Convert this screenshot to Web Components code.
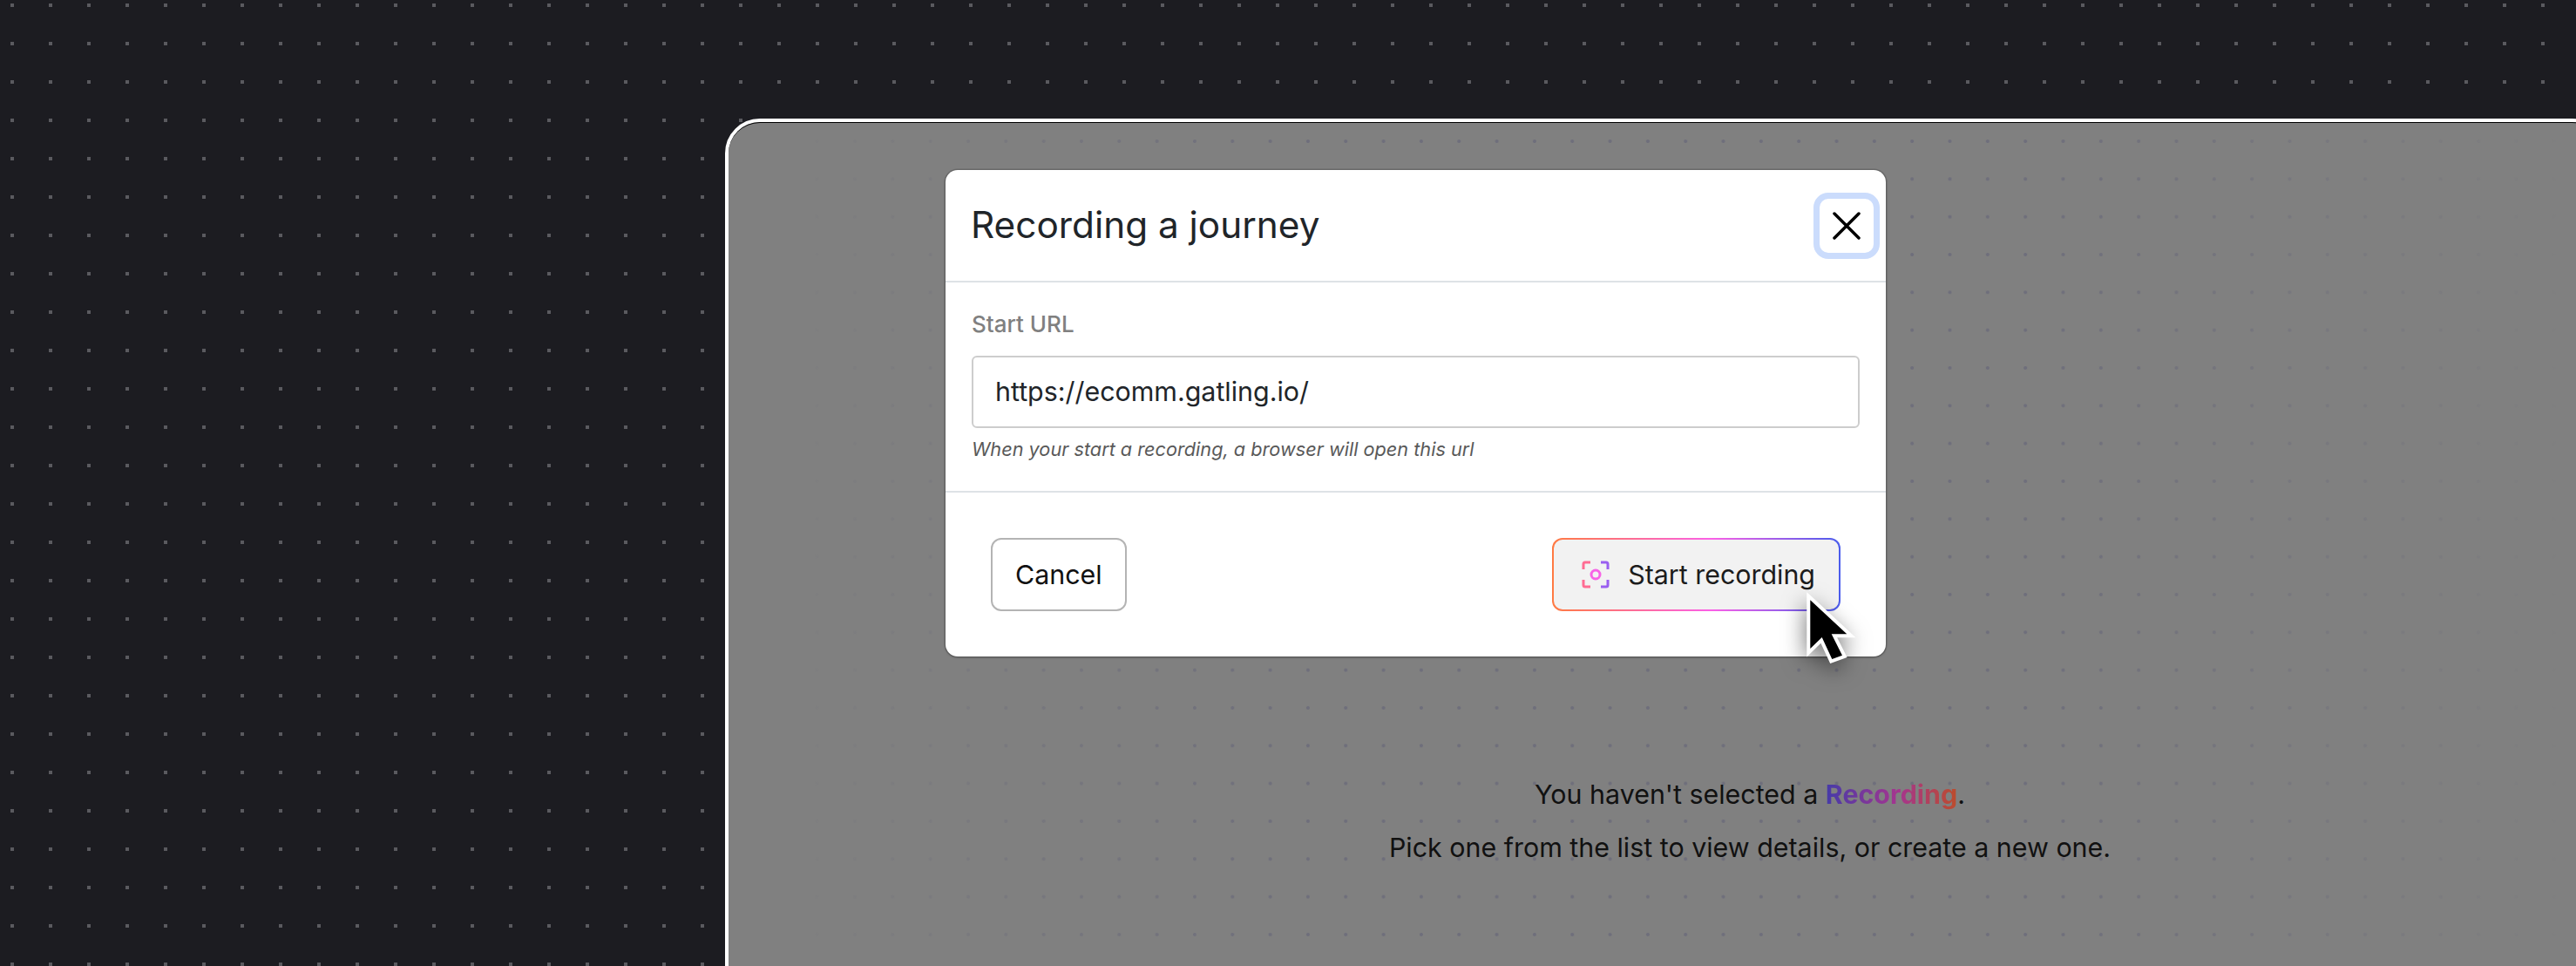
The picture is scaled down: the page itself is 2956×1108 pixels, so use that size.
<!DOCTYPE html>
<html lang="en">
<head>
<meta charset="utf-8">
<title>Recording a journey</title>
<style>
  html, body { margin: 0; height: 1108px; overflow: hidden; background: #1c1c21; }
  body { font-family: Inter, "Liberation Sans", sans-serif; }
</style>
</head>
<body>
<demo-stage>
  <demo-window>
    <empty-state></empty-state>
    <recording-dialog slot="dialog"></recording-dialog>
  </demo-window>
  <mouse-cursor slot="cursor"></mouse-cursor>
</demo-stage>

<script>
class DemoStage extends HTMLElement {
  constructor() {
    super();
    this.attachShadow({ mode: 'open' });
    this.shadowRoot.innerHTML = `
      <style>
        :host {
          display: block;
          position: relative;
          box-sizing: border-box;
          width: 2956px;
          height: 1108px;
          padding: 136px 0 0 832px;
          overflow: hidden;
          background-color: #5a5a5f;
          background-image:
            linear-gradient(to bottom, #1c1c21 4px, transparent 4px, transparent 8px, #1c1c21 8px),
            linear-gradient(to right, #1c1c21 12px, transparent 12px, transparent 16px, #1c1c21 16px);
          background-size: 44px 44px;
        }
        ::slotted(mouse-cursor) {
          position: absolute;
          left: 2060px;
          top: 670px;
        }
      </style>
      <slot></slot>
      <slot name="cursor"></slot>
    `;
  }
}

class DemoWindow extends HTMLElement {
  constructor() {
    super();
    this.attachShadow({ mode: 'open' });
    this.shadowRoot.innerHTML = `
      <style>
        :host {
          display: block;
          box-sizing: border-box;
          width: 2159px;
          height: 1100px;
          border: 4px solid #fff;
          border-radius: 40px;
          background: #808080;
        }
        .inner {
          position: relative;
          box-sizing: border-box;
          height: 100%;
          border-top: 1px solid #000;
          border-radius: 36px 36px 0 0;
          overflow: hidden;
        }
        .dots {
          position: absolute;
          inset: 0;
          background-image: radial-gradient(circle, #6e6e7b 1.5px, transparent 2.4px);
          background-size: 43.33px 43.33px;
          background-position: -6.67px -0.67px;
          -webkit-mask-image: linear-gradient(to right, transparent 60px, #000 640px, #000 1500px, transparent 2115px);
          mask-image: linear-gradient(to right, transparent 60px, #000 640px, #000 1500px, transparent 2115px);
        }
        .content {
          position: relative;
          padding: 746px 0 0 193px;
        }
        /* the modal lies over the page content */
        .overlay {
          position: absolute;
          inset: 0;
          display: flex;
          align-items: flex-start;
          padding: 54px 0 0 249px;
        }
      </style>
      <div class="inner">
        <div class="dots"></div>
        <div class="content"><slot></slot></div>
        <div class="overlay"><slot name="dialog"></slot></div>
      </div>
    `;
  }
}

class EmptyState extends HTMLElement {
  constructor() {
    super();
    this.attachShadow({ mode: 'open' });
    this.shadowRoot.innerHTML = `
      <style>
        :host {
          display: block;
          font-family: Inter, "Liberation Sans", sans-serif;
          font-size: 30.4px;
          line-height: 49px;
          color: #111;
          text-align: center;
        }
        p { margin: 0 0 12px; }
        b {
          font-weight: 700;
          background: linear-gradient(90deg, #463aa8, #a5358f 55%, #bc4c2c);
          -webkit-background-clip: text;
          background-clip: text;
          color: transparent;
        }
      </style>
      <p>You haven't selected a <b>Recording</b>.</p>
      <p>Pick one from the list to view details, or create a new one.</p>
    `;
  }
}

class GhostButton extends HTMLElement {
  constructor() {
    super();
    this.attachShadow({ mode: 'open' });
    this.shadowRoot.innerHTML = `
      <style>
        :host { display: block; }
        button {
          display: flex;
          align-items: center;
          gap: 21px;
          box-sizing: border-box;
          height: 84px;
          padding: 0 26px;
          border: 2px solid #b4b4b4;
          border-radius: 12px;
          background: #fff;
          color: #111;
          font: 400 30.4px Inter, "Liberation Sans", sans-serif;
        }
        :host([gradient]) button {
          padding: 0 27px 0 32px;
          border-color: transparent;
          background:
            linear-gradient(#f2f2f2, #f2f2f2) padding-box,
            linear-gradient(90deg, #ff7a42, #fb60e6 55%, #4a5cec) border-box;
          color: #1c1c1c;
        }
      </style>
      <button type="button"><slot name="icon"></slot><slot></slot></button>
    `;
  }
}

class RecordingDialog extends HTMLElement {
  constructor() {
    super();
    this.attachShadow({ mode: 'open' });
    this.shadowRoot.innerHTML = `
      <style>
        :host {
          display: block;
          box-sizing: border-box;
          width: 1079px;
          height: 558px;
          border-radius: 14px;
          background: #fff;
          box-shadow: 0 0 0 1.5px rgba(0, 0, 0, .16), 0 1px 3px rgba(0, 0, 0, .25);
          font-family: Inter, "Liberation Sans", sans-serif;
        }
        header {
          display: flex;
          align-items: center;
          justify-content: space-between;
          box-sizing: border-box;
          height: 129px;
          padding: 0 14px 0 29px;
          border-bottom: 2px solid #dee2e6;
        }
        h2 {
          margin: 0 0 2px;
          font-size: 42.3px;
          font-weight: 400;
          color: #212529;
        }
        .close {
          display: flex;
          align-items: center;
          justify-content: center;
          width: 62px;
          height: 62px;
          padding: 0;
          border: 0;
          border-radius: 10px;
          background: #fff;
          box-shadow: 0 0 0 7px #cbdcfc;
        }
        .body {
          box-sizing: border-box;
          height: 241px;
          padding: 30px 30px 0;
          border-bottom: 2px solid #dee2e6;
        }
        label {
          display: block;
          height: 48px;
          margin-bottom: 6px;
          line-height: 36px;
          font-size: 26px;
          font-weight: 500;
          color: #808080;
        }
        .input {
          box-sizing: border-box;
          height: 83px;
          padding: 0 25px;
          border: 2.5px solid #cdcdcd;
          border-radius: 6px;
          line-height: 78px;
          font-size: 30.4px;
          color: #212529;
        }
        small {
          display: block;
          margin-top: 11px;
          font-size: 21.7px;
          font-style: italic;
          color: #595959;
        }
        footer {
          display: flex;
          justify-content: space-between;
          padding: 52px;
        }
      </style>
      <header>
        <h2>Recording a journey</h2>
        <button class="close" type="button" aria-label="Close">
          <svg width="32" height="32" viewBox="0 0 32 32" fill="none" stroke="#000" stroke-width="3.5" stroke-linecap="round"><path d="M2 2l28 28M30 2L2 30"/></svg>
        </button>
      </header>
      <div class="body">
        <label>Start URL</label>
        <div class="input">https://ecomm.gatling.io/</div>
        <small>When your start a recording, a browser will open this url</small>
      </div>
      <footer>
        <ghost-button>Cancel</ghost-button>
        <ghost-button gradient>
          <svg slot="icon" width="32" height="32" viewBox="0 0 32 32" fill="none" stroke-width="3">
            <g stroke="#ff6c93">
              <path d="M10 2H4a2 2 0 0 0-2 2v6"/>
              <path d="M10 30H4a2 2 0 0 1-2-2v-6"/>
            </g>
            <g stroke="#9a5ff0">
              <path d="M22 2h6a2 2 0 0 1 2 2v6"/>
              <path d="M22 30h6a2 2 0 0 0 2-2v-6"/>
            </g>
            <circle cx="16" cy="16" r="5" stroke="#f764e6"/>
          </svg>
          Start recording
        </ghost-button>
      </footer>
    `;
  }
}

class MouseCursor extends HTMLElement {
  constructor() {
    super();
    this.attachShadow({ mode: 'open' });
    this.shadowRoot.innerHTML = `
      <style>
        :host { display: block; width: 90px; height: 100px; }
        svg { display: block; overflow: visible; filter: drop-shadow(-2px 8px 12px rgba(0, 0, 0, .5)); }
      </style>
      <svg width="90" height="100" viewBox="0 0 90 100">
        <path d="M17.3 18.3L59.3 57.3H41.7L54 81.7 42.3 86 30.7 61 17.3 74Z" fill="#000" stroke="#fff" stroke-width="8" paint-order="stroke" stroke-linejoin="miter" stroke-miterlimit="6"/>
      </svg>
    `;
  }
}

customElements.define('demo-stage', DemoStage);
customElements.define('demo-window', DemoWindow);
customElements.define('empty-state', EmptyState);
customElements.define('ghost-button', GhostButton);
customElements.define('recording-dialog', RecordingDialog);
customElements.define('mouse-cursor', MouseCursor);
</script>
</body>
</html>
